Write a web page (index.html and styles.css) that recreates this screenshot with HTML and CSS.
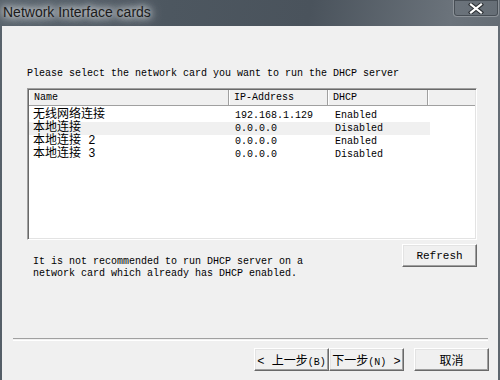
FILE: index.html
```html
<!DOCTYPE html>
<html lang="zh">
<head>
  <meta charset="UTF-8">
  <title>Network Interface cards</title>
  <link rel="stylesheet" href="styles.css">
</head>
<body>
  <div class="window">
    <div class="titlebar">
      <div class="title">Network Interface cards</div>
      <div class="close">
        <svg width="18" height="11" viewBox="0 0 18 11">
          <path d="M4 1.5 L14 9.5 M14 1.5 L4 9.5" stroke="#2b2f33" stroke-width="4.2" stroke-linecap="square"/>
          <path d="M4 1.5 L14 9.5 M14 1.5 L4 9.5" stroke="#fff" stroke-width="2.2" stroke-linecap="square"/>
        </svg>
      </div>
    </div>

    <div class="client">
      <p class="prompt">Please select the network card you want to run the DHCP server</p>

      <!-- list of cards -->
      <div class="list">
        <div class="list-head">
          <div class="col">Name</div>
          <div class="col">IP-Address</div>
          <div class="col">DHCP</div>
          <div class="col filler"></div>
        </div>
        <div class="row">
          <div class="cn">无线网络连接</div>
          <div>192.168.1.129</div>
          <div>Enabled</div>
        </div>
        <div class="row alt">
          <div class="cn">本地连接</div>
          <div>0.0.0.0</div>
          <div>Disabled</div>
        </div>
        <div class="row">
          <div class="cn">本地连接 2</div>
          <div>0.0.0.0</div>
          <div>Enabled</div>
        </div>
        <div class="row">
          <div class="cn">本地连接 3</div>
          <div>0.0.0.0</div>
          <div>Disabled</div>
        </div>
      </div>

      <div class="note-row">
        <p class="note">It is not recommended to run DHCP server on a<br>network card which already has DHCP enabled.</p>
        <button class="btn refresh">Refresh</button>
      </div>

      <div class="separator"></div>

      <div class="footer">
        <button class="btn nav">&lt; 上一步<span class="key">(B)</span></button>
        <button class="btn nav">下一步<span class="key">(N)</span> &gt;</button>
        <button class="btn cancel">取消</button>
      </div>
    </div>
  </div>
</body>
</html>
```

FILE: styles.css
```css
body {
  margin: 0;
  padding: 0;
  background-color: #3c434a;
}
.window {
  width: 500px;
  height: 380px;
  background: linear-gradient(100deg, #59636c 0%, #4d5760 30%, #4a535c 55%, #6b737b 80%, #5e666e 100%);
  overflow: hidden;
}
.titlebar {
  height: 26px;
  display: flex;
  justify-content: space-between;
}
.title {
  margin: 4px 0 0 3px;
  font-family: "Liberation Sans", Arial, sans-serif;
  font-size: 14px;
  line-height: 16px;
  height: 16px;
  color: #1b1b1b;
  text-shadow: 0 0 6px #e8eaec, 0 0 10px #d8dcdf, 0 0 14px #c5cace;
}
.close {
  width: 44px;
  height: 16px;
  margin-right: 1px;
  border: 1px solid #8c9298;
  border-top: none;
  border-radius: 0 0 4px 4px;
  box-shadow: inset 0 0 0 1px #474e55;
  display: flex;
  align-items: center;
  justify-content: center;
}
.client {
  margin: 0 2px;
  height: 354px;
  background-color: #f0f0f0;
  display: flex;
  flex-direction: column;
  font-family: "Liberation Mono", "Noto Sans CJK SC", monospace;
  font-size: 10px;
  color: #000;
}
.prompt {
  margin: 42px 0 0 25px;
  line-height: 12px;
  height: 12px;
}
.list {
  margin: 8px 0 0 25px;
  width: 447px;
  height: 149px;
  background-color: #fff;
  border-top: 1px solid #a0a0a0;
  border-left: 1px solid #a0a0a0;
  border-right: 1px solid #fff;
  border-bottom: 1px solid #fff;
  box-shadow: inset 1px 1px 0 #696969, inset -1px -1px 0 #e3e3e3;
  padding: 1px 0 0 1px;
}
.list-head {
  display: grid;
  grid-template-columns: 200px 99px 100px 1fr;
  height: 15px;
  background-color: #f0f0f0;
  border-bottom: 1px solid #a0a0a0;
  margin-right: 1px;
}
.col {
  padding-left: 5px;
  line-height: 15px;
  border-right: 1px solid #a0a0a0;
  box-shadow: inset 1px 0 0 #fff;
}
.col.filler {
  border-right: none;
}
.row {
  display: grid;
  grid-template-columns: 200px 100px 100px;
  width: 401px;
  height: 13px;
  line-height: 13px;
}
.list-head + .row {
  margin-top: 3px;
}
.row div {
  padding-left: 6px;
}
.row .cn {
  padding-left: 4px;
  font-size: 12px;
}
.row.alt {
  background-color: #f0f0f0;
}
.note-row {
  display: flex;
  justify-content: space-between;
  margin: 4px 21px 0 31px;
}
.note {
  margin: 12px 0 0 0;
  line-height: 12px;
}
.btn {
  font-family: "Liberation Mono", "Noto Sans CJK SC", monospace;
  font-size: 11px;
  color: #000;
  background-color: #f0f0f0;
  border-top: 1px solid #fff;
  border-left: 1px solid #fff;
  border-right: 1px solid #696969;
  border-bottom: 1px solid #696969;
  box-shadow: inset -1px -1px 0 #a0a0a0, inset 1px 1px 0 #e3e3e3;
  padding: 0;
  margin: 0;
}
.refresh {
  width: 75px;
  height: 23px;
}
.separator {
  margin: 58px 10px 0 11px;
  height: 1px;
  border-top: 1px solid #a0a0a0;
  border-bottom: 1px solid #fff;
}
.footer {
  display: flex;
  margin: 7px 0 0 252px;
}
.nav {
  width: 75px;
  height: 23px;
  font-size: 12px;
}
.key {
  font-size: 10px;
}
.cancel {
  width: 75px;
  height: 23px;
  margin-left: 10px;
  font-size: 12px;
}
```
